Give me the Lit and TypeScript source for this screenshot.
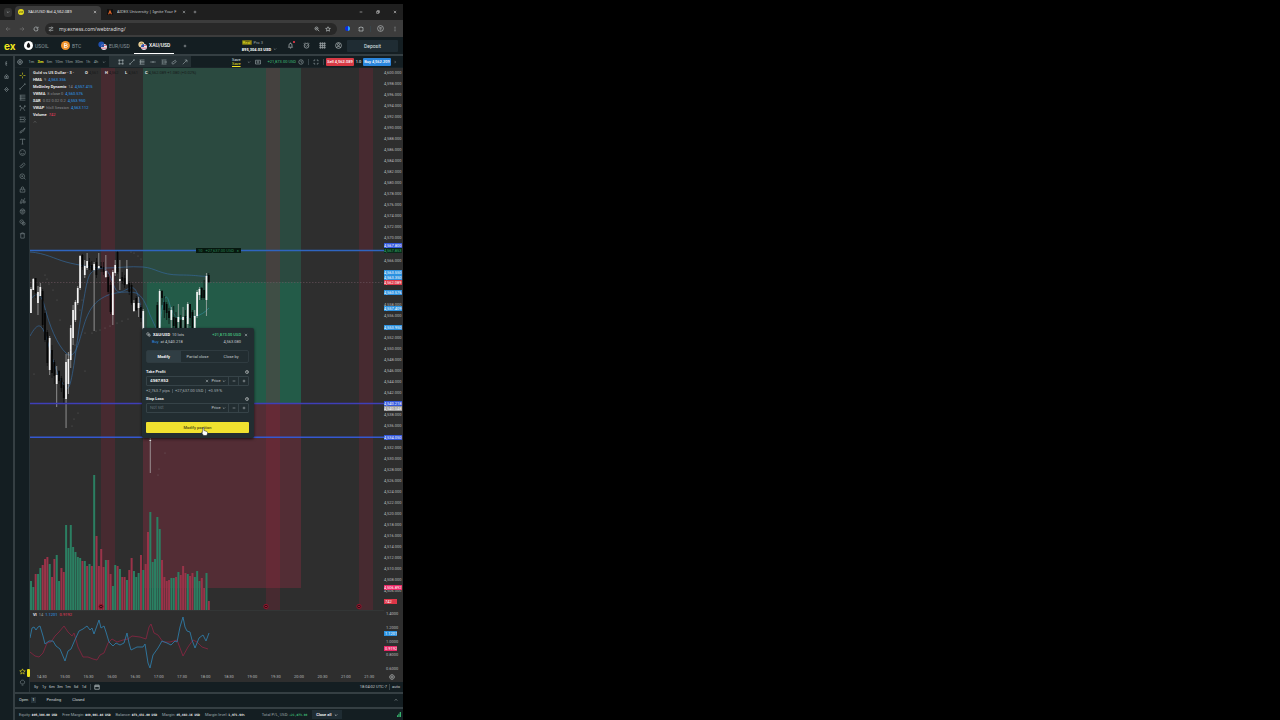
import { LitElement, html, svg, css } from "lit";
import { customElement } from "lit/decorators.js";

// ---------- icons (24 x 24 grid) ----------
const ICONS: Record<string, any> = {
  down: svg`<path d="M5 9l7 7 7-7"/>`,
  up: svg`<path d="M5 15l7-7 7 7"/>`,
  right: svg`<path d="M9 5l7 7-7 7"/>`,
  close: svg`<path d="M5 5l14 14M19 5L5 19"/>`,
  plus: svg`<path d="M12 4v16M4 12h16"/>`,
  minus: svg`<path d="M4 12h16"/>`,
  restore: svg`<path d="M4 8h12v12H4zM8 8V4h12v12h-4"/>`,
  back: svg`<path d="M21 12H4M11 5l-7 7 7 7"/>`,
  forward: svg`<path d="M3 12h17M13 5l7 7-7 7"/>`,
  reload: svg`<path d="M20 12a8 8 0 1 1-3-6.200M20 3v6h-6"/>`,
  tune: svg`<path d="M3 7h8M18 7h3M3 17h3M13 17h8"/><circle cx="15" cy="7" r="3"/><circle cx="9" cy="17" r="3"/>`,
  zoom: svg`<circle cx="10" cy="10" r="6"/><path d="M15 15l6 6M7 10h6"/>`,
  star: svg`<path d="M12 3l2.700 6.200 6.800.6-5.200 4.400 1.600 6.600L12 17.300 6.100 20.800l1.600-6.600L2.500 9.800l6.800-.6z"/>`,
  puzzle: svg`<path d="M4 6h5a3 3 0 0 1 6 0h5v14H4v-5a3 3 0 0 0 0-5z"/>`,
  avatar: svg`<circle cx="12" cy="12" r="10"/><path d="M8 9h8M8 13h8M10 17h4"/>`,
  dots: svg`<path d="M12 3v4M12 10v4M12 17v4"/>`,
  bell: svg`<path d="M5 18h14l-2-3v-5a5 5 0 0 0-10 0v5zM10 21h4M12 5V2"/>`,
  alarm: svg`<circle cx="12" cy="13" r="8"/><path d="M9 12l3 3 4-4M3 6l4-4M21 6l-4-4"/>`,
  grid: svg`<path d="M3 3h4v4H3zM10 3h4v4h-4zM17 3h4v4h-4zM3 10h4v4H3zM10 10h4v4h-4zM17 10h4v4h-4zM3 17h4v4H3zM10 17h4v4h-4zM17 17h4v4h-4z"/>`,
  user: svg`<circle cx="12" cy="12" r="10"/><circle cx="12" cy="9" r="3.500"/><path d="M5 19c2-5 12-5 14 0"/>`,
  clock: svg`<circle cx="12" cy="12" r="9"/><path d="M12 7v5l4 2"/>`,
  gear: svg`<circle cx="12" cy="12" r="9"/><circle cx="12" cy="12" r="3"/><path d="M12 1v4M12 19v4M1 12h4M19 12h4"/>`,
  rect: svg`<path d="M5 5h14v14H5z"/><path d="M3 3h4v4H3zM17 3h4v4h-4zM3 17h4v4H3zM17 17h4v4h-4z"/>`,
  line: svg`<path d="M5 19L19 5"/><circle cx="4" cy="20" r="2"/><circle cx="20" cy="4" r="2"/>`,
  arrow: svg`<path d="M3 21L20 4M11 4h9v9"/>`,
  fib: svg`<path d="M2 4h20M2 10h20M2 15h20M2 21h20M6 4v17"/>`,
  hline: svg`<path d="M1 12h8M15 12h8"/><circle cx="12" cy="12" r="2.500"/>`,
  position: svg`<path d="M2 4h20M2 12h14M2 20h20"/><circle cx="19" cy="12" r="3"/><path d="M6 4v16" stroke-dasharray="2 2"/>`,
  channel: svg`<path d="M3 15L17 5M7 21L21 11M3 15l4 6M17 5l4 6"/>`,
  camera: svg`<path d="M2 5h20v15H2z"/><circle cx="12" cy="12" r="4"/>`,
  full: svg`<path d="M4 9V4h5M15 4h5v5M20 15v5h-5M9 20H4v-5"/>`,
  cross: svg`<path d="M12 2v7M12 15v7M2 12h7M15 12h7"/>`,
  pattern: svg`<path d="M4 20L9 9l6 3 5 8M4 4l5 5M20 4l-5 8"/><circle cx="4" cy="4" r="2"/><circle cx="20" cy="4" r="2"/>`,
  brush: svg`<path d="M21 3L10 13M10 13c-4-1-6 2-7 7 5 1 9-2 7-7zM14 16l7-13"/>`,
  text: svg`<path d="M4 7V4h16v3M12 4v17M9 21h6"/>`,
  smile: svg`<circle cx="12" cy="12" r="10"/><path d="M7 14c2 4 8 4 10 0M8 9h1M15 9h1"/>`,
  ruler: svg`<path d="M3 16L16 3l5 5L8 21zM8 12l3 3M12 8l3 3"/>`,
  magnify: svg`<circle cx="11" cy="11" r="8"/><path d="M17 17l5 5M11 8v6M8 11h6"/>`,
  lock: svg`<path d="M4 11h16v10H4zM8 11V7a4 4 0 0 1 8 0v4M12 15v2"/>`,
  magnet: svg`<path d="M4 20l5-12 6 5 5-9M3 21h7v-6M14 20h7v-6h-7z"/>`,
  eye: svg`<path d="M12 3a8 9 0 1 0 .1 0zM4 8l16 0"/><circle cx="12" cy="14" r="3"/>`,
  link: svg`<circle cx="9" cy="9" r="6"/><circle cx="16" cy="16" r="5"/><path d="M7 9h4M16 13v6"/>`,
  trash: svg`<path d="M3 6h18M6 6v15h12V6M9 6V3h6v3"/>`,
  bulb: svg`<path d="M8 17c-6-5-3-13 4-13s10 8 4 13zM9 21h6"/>`,
  calendar: svg`<path d="M3 5h18v16H3zM3 10h18M8 2v5M16 2v5"/>`,
  sort: svg`<path d="M9 20V4h6M9 12h6M9 20h6"/>`,
  home: svg`<path d="M4 21V9l8-6 8 6v12z"/><path d="M8 13h8M12 10v8"/>`,
  diamond: svg`<path d="M12 2l9 10-9 10-9-10z"/><path d="M7 12h10"/>`,
};
const icon = (name: string, cls = "") =>
  html`<svg class="ic ${cls}" viewBox="0 0 24 24" aria-hidden="true">${ICONS[name]}</svg>`;

// ---------- chart data ----------
const PITCH = 2.34;
const barX = (i: number) => 30 + i * PITCH;

// volume: direction and bar height
const VOLUME =
  "g29 g23 r36 g36 g42 r45 r51 r53 g46 r33 r51 g55 g29 r42 r38 g85 g62 g85 g63 g58 g53 g52 r49 g49 r44 g46 r44 g135 r74 r44 r61 r43 g50 r50 r36 g24 g45 r44 g41 r33 r33 g30 r40 r52 g39 g33 g37 r55 g40 r46 r78 g98 g48 g51 g93 g81 r50 r33 r29 r30 g32 g32 r33 g38 r35 r44 r37 g36 r34 r37 g33 g39 g29 r32 r22 g37 r9"
    .split(" ")
    .map((v) => ({ up: v[0] === "g", h: Number(v.slice(1)) }));

// candles: slot, kind, body top, body bottom, wick top, wick bottom
const CANDLES: [number, string, number, number, number, number][] = [
  [0, "w", 289, 313, 287, 313], [1, "w", 279, 290, 278, 290], [2, "b", 278, 293, 278, 298],
  [3, "w", 292, 303, 286, 315], [4, "w", 287, 296, 283, 296], [5, "b", 291, 325, 289, 328],
  [6, "b", 313, 340, 310, 342], [7, "b", 332, 363, 330, 366], [8, "w", 338, 370, 336, 375],
  [9, "b", 350, 373, 345, 378], [10, "b", 362, 376, 360, 384], [11, "w", 375, 384, 366, 407],
  [12, "b", 371, 381, 370, 384], [13, "b", 378, 388, 376, 392], [14, "b", 385, 398, 382, 404],
  [15, "w", 362, 399, 354, 428], [16, "w", 359, 384, 352, 394], [17, "w", 328, 360, 325, 368],
  [18, "w", 310, 338, 305, 345], [19, "w", 302, 320, 300, 322], [20, "w", 288, 303, 286, 305],
  [21, "w", 256, 288, 255, 290], [22, "b", 255, 267, 254, 270], [23, "w", 266, 275, 260, 278],
  [24, "w", 261, 268, 253, 270], [25, "b", 262, 268, 258, 270], [26, "b", 265, 270, 261, 272],
  [27, "w", 264, 270, 262, 331], [28, "b", 262, 275, 258, 278], [29, "w", 266, 268, 253, 269],
  [30, "b", 266, 268, 262, 272], [31, "b", 267, 272, 262, 275], [32, "w", 271, 277, 255, 278],
  [33, "b", 277, 292, 274, 294], [34, "b", 285, 312, 282, 314], [35, "w", 272, 315, 270, 325],
  [36, "w", 265, 273, 260, 276], [37, "b", 252, 272, 250, 274], [38, "w", 279, 281, 260, 290],
  [39, "b", 277, 281, 272, 284], [40, "b", 278, 285, 275, 288], [41, "w", 269, 284, 260, 285],
  [42, "b", 283, 292, 281, 295], [43, "b", 285, 303, 283, 305], [44, "w", 303, 311, 300, 312],
  [45, "b", 298, 310, 296, 311], [46, "w", 303, 308, 297, 317], [47, "b", 307, 318, 305, 322],
  [48, "w", 311, 332, 309, 334], [51, "w", 440, 441, 438, 473], [54, "b", 305, 330, 302, 332],
  [55, "w", 291, 330, 289, 332], [56, "b", 291, 298, 290, 305], [57, "b", 302, 310, 296, 318],
  [58, "b", 304, 313, 302, 320], [59, "b", 311, 318, 308, 324], [60, "w", 310, 320, 307, 330],
  [61, "b", 317, 326, 306, 330], [62, "b", 318, 328, 312, 330], [63, "w", 317, 322, 304, 330],
  [64, "b", 320, 328, 315, 330], [65, "w", 317, 320, 307, 330], [66, "b", 316, 328, 310, 330],
  [67, "w", 304, 324, 302, 328], [68, "b", 304, 318, 304, 326], [69, "b", 312, 330, 310, 330],
  [70, "w", 316, 330, 310, 332], [71, "w", 292, 316, 290, 318], [72, "w", 289, 295, 287, 300],
  [73, "b", 288, 298, 287, 300], [74, "b", 290, 298, 280, 300], [75, "w", 276, 300, 273, 316],
  [76, "b", 275, 282, 273, 283],
];

const SESSION_BANDS = [101, 266, 359];

const OSC_BLUE =
  "30,638 32,628 34,627 36,630 38,627 40,626 43,636 45,644 49,641 53,641 56,646 60,649 65,661 68,651 71,649 74,642 79,631 83,629 87,626 90,630 92,628 94,634 99,620 101,628 104,626 106,632 109,642 113,646 116,643 120,645 124,643 127,633 129,643 131,650 137,647 143,647 145,644 148,663 150,668 153,655 158,648 162,641 167,643 171,645 175,641 177,642 180,627 183,617 185,627 187,631 190,632 192,640 195,648 199,638 203,635 206,641 209,633";
const OSC_RED =
  "30,652 35,656 39,657 43,653 47,643 51,642 55,636 59,632 64,626 68,632 72,636 74,633 78,647 83,657 88,657 93,659 97,660 100,655 104,653 108,643 112,639 117,642 123,640 128,639 132,636 140,637 146,639 149,627 151,624 154,633 158,635 163,642 170,642 177,640 180,648 183,656 188,647 193,640 197,642 202,647 208,649";

const DOTS: [number, number][] = [
  [45, 275], [47, 279], [49, 284], [53, 290], [57, 300], [60, 320], [67, 355], [71, 350], [75, 345],
  [80, 310], [82, 300], [85, 333], [92, 333], [96, 331], [100, 330], [105, 328], [110, 326], [117, 323],
  [122, 321], [128, 319], [131, 252], [134, 253], [138, 256], [141, 259], [34, 374], [85, 371],
  [78, 413], [74, 419], [72, 426], [165, 453], [159, 469], [158, 475],
];

// grid prices that a tag covers are left blank
const COVERED = new Set([4568, 4564, 4562, 4560, 4554, 4540, 4534, 4504]);
const PRICES = Array.from({ length: 49 }, (_, i) => 4600 - i * 2);
const priceLabel = (p: number) => (COVERED.has(p) ? "\u00a0" : `${p.toLocaleString("en-US")}.000`);
const TIMES = "14:30 15:00 15:30 16:00 16:30 17:00 17:30 18:00 18:30 19:00 19:30 20:00 20:30 21:00 21:30".split(" ");

// price-scale tags: top within the chart, label, style
const TAGS: [number, string, string][] = [
  [175, "4,567.800", "royal"], [180, "4,567.853", "green"], [202, "4,563.550", "sky"], [207, "4,563.350", "sky"],
  [212, "4,562.089", "red"], [222, "4,560.576", "sky"], [238, "4,557.409", "sky"],
  [257, "4,553.950", "sky"], [333, "4,540.218", "royal"], [338, "4,540.048", "grey"],
  [367, "4,534.050", "royal"], [517, "4,506.892", "pink"],
  [531, "742", "red narrow"], [563, "1.1201", "sky narrow"], [578, "0.9192", "pink narrow"],
];

@customElement("app-root")
export class AppRoot extends LitElement {
  static styles = css`
    :host {
      display: grid;
      grid-template-columns: 403fr 877fr;
      min-height: 100vh;
      background: #000;
      color: #c9cfd1;
      font: 5px/6px Roboto, "Liberation Sans", sans-serif;
    }
    * { box-sizing: border-box; }
    button, input {
      font: inherit; color: inherit; background: none; border: 0; padding: 0; margin: 0; min-width: 0;
    }
    button { cursor: pointer; white-space: nowrap; display: inline-flex; align-items: center; justify-content: center; }
    .ic {
      width: 6px; height: 6px; flex: none; display: block;
      fill: none; stroke: currentColor; stroke-width: 2.500;
    }
    .ic.s { width: 4px; height: 4px; stroke-width: 3; }
    .ic.l { width: 7px; height: 7px; stroke-width: 2; }
    .grow { flex: 1; }
    .screen { display: flex; flex-direction: column; padding-top: 4px; min-width: 0; background: #000; }

    /* browser */
    .tabstrip { display: flex; align-items: center; height: 16px; padding: 2px 6px 2px 4px; background: #1f1f1f; gap: 3px; }
    .menu { width: 8px; height: 9px; border-radius: 3px; background: #343434; }
    .tab { display: flex; align-items: center; height: 100%; gap: 4px; padding: 0 4px 0 3px; font-family: "Noto Sans", sans-serif; font-size: 4px; width: 86px; }
    .tab.on { background: #3c3c3c; border-radius: 4px 4px 0 0; color: #f1f1f1; height: 14px; margin-bottom: -2px; padding-bottom: 2px; }
    .tab span { flex: 1; white-space: nowrap; overflow: hidden; }
    .fav { width: 6px; height: 6px; border-radius: 3px; background: #e6dc1c; flex: none; color: #222; font-size: 4px; line-height: 5px; text-align: center; }
    .flame { width: 6px; height: 6px; flex: none; display: block; }
    .wins { display: flex; gap: 13px; color: #eee; }
    .address { display: flex; align-items: center; height: 17px; background: #3c3c3c; padding: 0 5px; gap: 8px; }
    .address .dim { color: #777; }
    .address .sep { margin: 0 -2px; }
    .omni { flex: 1; display: flex; align-items: center; height: 12px; border-radius: 6px; background: #282828; padding: 0 6px 0 3px; gap: 5px; margin-left: -2px; }
    .omni input { flex: 1; color: #dedede; font-family: "Noto Sans", sans-serif; }
    .ball { width: 5px; height: 5px; border-radius: 3px; background: linear-gradient(90deg, #0b2be0 50%, #27a4ff 50%); }

    /* terminal header */
    .top { display: flex; align-items: center; height: 19px; background: #141e22; border-bottom: 2px solid #353f43; padding: 0 5px 0 4px; }
    .logo { color: #efe51e; font: bold 10px/12px Inter, sans-serif; width: 16px; }
    .pairs { display: flex; height: 17px; }
    .pair { display: flex; gap: 2px; height: 17px; color: #87949a; width: 37px; justify-content: flex-start; padding-left: 4px; }
    .pair.wide { width: 41px; }
    .pair.on { color: #fff; font-weight: 500; border-bottom: 1px solid #fff; padding-left: 4px; width: 40px; margin-left: -1px; }
    .coin { width: 9px; height: 9px; display: block; flex: none; }
    .addpair { width: 22px; }
    .acct { display: flex; flex-direction: column; align-items: flex-start; gap: 2px; }
    .acct .line { display: flex; gap: 2px; align-items: center; font-size: 4px; line-height: 5px; color: #9aa5a9; }
    .acct mark { background: #6c6a14; color: #f3e81b; padding: 0 1px; border-radius: 1px; }
    .acct b { color: #fff; font-weight: 700; }
    .tools { display: flex; gap: 9px; margin: 0 5px 0 10px; color: #cfd5d7; }
    .bellbox { position: relative; }
    .bellbox i { position: absolute; right: -1px; top: -1px; width: 2px; height: 2px; border-radius: 1px; background: #ff3b4e; }
    .deposit { width: 51px; height: 12px; background: #1f2c33; color: #dfe5e7; border-radius: 1px; }

    .main { flex: 1; display: grid; grid-template-columns: 13px 1fr; min-height: 0; }
    .rail { background: #141e22; display: flex; flex-direction: column; align-items: center; padding-top: 5px; gap: 8px; color: #a5afb3; }
    .rail .ic { width: 5px; height: 5px; }
    .work { display: flex; flex-direction: column; border-left: 2px solid #353f43; min-width: 0; background: #141e22; }

    .bar { display: flex; align-items: center; height: 12px; padding-right: 4px; color: #98a3a7; font-size: 4px; border-bottom: 1px solid #1a2428; }
    .bar > .ic { margin: 0 2px; }
    .bar .sep { margin: 0 2px; }
    .frames { display: flex; margin-left: 2px; }
    .frames button { width: 9px; height: 10px; }
    .frames .long { width: 10px; }
    .frames .short { width: 8px; }
    .frames .on { color: #efe51e; font-weight: 700; }
    .draws { display: flex; align-items: center; justify-content: space-between; background: #253034; width: 82px; height: 11px; padding: 0 3px 0 9px; margin-left: 1px; }
    .save { flex-direction: column; color: #dfe5e7; line-height: 4px; margin-right: 4px; }
    .save u { color: #efe51e; }
    .pl { color: #3fbf77; padding-left: 5px; }
    .sep { width: 1px; height: 6px; background: #39454a; margin: 0 4px; }
    .trade { width: 28px; height: 8px; border-radius: 1px; color: #fff; font-weight: 500; }
    .sell { background: #d93a45; }
    .buy { background: #2a86dd; }
    .bar output { color: #fff; width: 9px; text-align: center; white-space: nowrap; }

    .body { flex: 1; display: grid; grid-template-columns: 15px 1fr; min-height: 0; }
    .side { display: flex; flex-direction: column; align-items: center; padding: 4px 0 6px; gap: 4px; color: #7f8b8f; border-right: 1px solid #2a3438; position: relative; }
    .side .brk { margin-top: 2px; }
    .side .hot { color: #efe51e; }
    .handle { position: absolute; right: -1px; bottom: 15px; width: 3px; height: 8px; background: #efe51e; border-radius: 1px; }
    .center { display: flex; flex-direction: column; min-width: 0; }
    .chart { flex: 1 1 0; display: grid; grid-template: minmax(0, 1fr) / 1fr 19px; background: #2e2e2e; position: relative; min-height: 0; }
    .plot { display: block; width: 100%; height: 100%; min-height: 0; }
    .scale { position: relative; font-size: 4px; line-height: 6px; color: #b5b8b9; display: grid; grid-template-rows: 538fr 66fr; white-space: nowrap; min-height: 0; }
    .prices { min-height: 0; padding-top: 2px; display: flex; flex-direction: column; justify-content: space-between; }
    .osc { min-height: 0; display: flex; flex-direction: column; justify-content: space-between; padding-top: 5px; padding-left: 2px; }
    .mark { position: absolute; left: 0; right: 1px; height: 5px; line-height: 5px; color: #fff; overflow: hidden; }
    .royal { background: #3358dc; }
    .sky { background: #2b91e0; }
    .red { background: #dc3648; }
    .pink { background: #e92766; }
    .grey { background: #999; }
    .green { background: #09291a; color: #36a968; }
    .narrow { right: 6px; padding-left: 1px; }
    .legend { position: absolute; left: 3px; top: 1px; font-size: 4px; color: #8a8d8e; white-space: nowrap; }
    .legend div { display: flex; gap: 2px; height: 7px; align-items: center; }
    .legend b { color: #f2f2f2; font-weight: 600; }
    .legend h1 { margin: 0; font: 600 4px/7px "Noto Sans", sans-serif; color: #eee; width: 50px; }
    .legend .v, .osclegend .v { color: #2d9cf0; }
    .legend .r, .osclegend .r { color: #f03a5d; }
    .ohlc { display: flex; color: #16191a; }
    .ohlc span { width: 20px; }
    .legend .ohlc b { font-weight: 700; color: #e9e9e9; }
    .osclegend { position: absolute; left: 3px; bottom: 54px; display: flex; gap: 2px; font-size: 4px; line-height: 6px; color: #999; }
    .osclegend b { color: #eee; }
    .times { display: grid; grid-template-columns: 351fr 22fr; align-items: center; justify-items: center; height: 10px; background: #2e2e2e; font-size: 4px; color: #b5b8b9; }
    .times div { width: 100%; display: grid; grid-template-columns: repeat(15, 1fr); text-align: center; }
    .range { display: flex; align-items: center; height: 10px; font-size: 4px; color: #c6cdd0; padding: 0 3px 0 2px; }
    .range button { width: 8px; }
    .range .sep { margin: 0 2px; }

    .orders { display: flex; align-items: center; height: 15px; border-top: 2px solid #353f43; padding: 0 5px 2px 4px; gap: 11px; color: #d0d7da; font-size: 4px; }
    .orders button { gap: 3px; }
    .orders i { font: 500 4px/6px Roboto, sans-serif; background: #26333a; padding: 0 1px; }
    .foot { display: flex; align-items: center; height: 13px; border-top: 2px solid #353f43; padding: 0 2px 0 4px; font-size: 4px; color: #9ba5a9; gap: 5px; white-space: nowrap; }
    .foot b { color: #f1f4f5; font: bold 3px/6px "DejaVu Sans Mono", monospace; }
    .foot .gain { color: #3fbf77; }
    .total { margin-left: 12px; }
    .closeall { width: 30px; height: 9px; background: #1f2c33; color: #fff; gap: 3px; font-weight: 500; }
    .sig { width: 4px; height: 5px; fill: #35b36c; display: block; }

    /* position dialog */
    .dlg { position: absolute; left: 112px; top: 260px; width: 112px; padding: 3px 5px 5px 4px; background: #222d31; border-radius: 2px; display: flex; flex-direction: column; box-shadow: 0 1px 3px #000a; color: #c3cacd; font-size: 4px; }
    .row { display: flex; align-items: center; gap: 2px; height: 7px; white-space: nowrap; }
    .row .ic { width: 5px; height: 5px; }
    .row b { color: #fff; font-weight: 600; }
    .row .up { color: #48c681; font-weight: 500; }
    .row .b { color: #2d8fe0; }
    .row.second { padding: 0 8px 0 6px; height: 8px; }
    .row.first .x { width: 6px; }
    .row .x .ic { width: 4px; height: 4px; }
    .seg { display: grid; grid-template-columns: repeat(3, 1fr); height: 13px; border: 1px solid #2f3b40; border-radius: 2px; margin: 4px 0 5px; }
    .seg .on { background: #303e44; color: #fff; font-weight: 600; }
    .lab { display: flex; justify-content: space-between; align-items: center; height: 8px; color: #f0f2f3; font: 600 4px/6px Roboto, sans-serif; }
    .field { display: flex; align-items: center; height: 10px; border: 1px solid #364348; border-radius: 1px; }
    .field input { flex: 1; padding: 0 3px; color: #fff; font: 600 4px/6px Inter, sans-serif; width: 20px; }
    .field input::placeholder { color: #657278; font-weight: 400; opacity: 1; }
    .field .unit { gap: 1px; width: 19px; }
    .field .step { width: 10px; height: 8px; border-left: 1px solid #364348; }
    .hint { display: flex; height: 9px; align-items: center; color: #a4aeb2; white-space: nowrap; }
    .hint span + span { border-left: 1px solid #47545a; padding-left: 2px; margin-left: 2px; line-height: 4px; }
    .go { height: 11px; background: #f0e12f; color: #4a4715; border-radius: 1px; margin-top: 9px; font-weight: 500; }
    .cursor { position: absolute; left: 171px; top: 359px; width: 7px; height: 9px; }
    .tp { position: absolute; left: 166px; top: 180px; width: 45px; height: 5px; background: #07180f; color: #2c8556; font: 4px/5px Roboto, sans-serif; display: flex; justify-content: space-between; padding: 0 2px; white-space: nowrap; }
  `;

  private coin(kind: string) {
    const parts: Record<string, any> = {
      oil: svg`<circle cx="12" cy="12" r="12" fill="#fff"/><path d="M12 4c7 8 5 14 0 14S5 12 12 4z" fill="#111"/>`,
      btc: svg`<circle cx="12" cy="12" r="12" fill="#f0922b"/><path d="M9 6v12M9 7h4c4 0 4 5 0 5H9h5c4 0 4 5 0 5H9" fill="none" stroke="#fff" stroke-width="2"/>`,
      eur: svg`<circle cx="9" cy="9" r="8" fill="#1f4fae"/><circle cx="16" cy="16" r="8" fill="#e5e5ee"/><path d="M8 16a8 8 0 0 1 8-8v8z" fill="#2d50a8"/><path d="M16 12h7M9 19h14" stroke="#d8455a" stroke-width="2"/>`,
      xau: svg`<circle cx="9" cy="9" r="8" fill="#e9cf96"/><path d="M5 8l6-3 3 5" stroke="#8b6b33" stroke-width="2" fill="none"/><circle cx="16" cy="16" r="8" fill="#e5e5ee"/><path d="M8 16a8 8 0 0 1 8-8v8z" fill="#2d50a8"/><path d="M16 12h7M9 19h14" stroke="#d8455a" stroke-width="2"/>`,
    };
    return html`<svg class="coin" viewBox="0 0 24 24" aria-hidden="true">${parts[kind]}</svg>`;
  }

  private plot() {
    return html`<svg class="plot" viewBox="30 68 354 604" preserveAspectRatio="none" role="img" aria-label="Gold vs US Dollar chart">
      <rect x="143" y="68" width="158" height="336" fill="#2b4a40"/>
      <rect x="147" y="282" width="154" height="122" fill="#235b48"/>
      <rect x="143" y="404" width="158" height="184" fill="#532d35"/>
      ${SESSION_BANDS.map((x) => svg`<rect x=${x} y="68" width="14" height="542" fill="#b01c3c" fill-opacity=".2"/>`)}
      <path d="M30 282.500H384" stroke="#6d5560" stroke-width=".6" stroke-dasharray="1.500 1.500"/>
      ${VOLUME.map((v, i) => svg`<rect x=${barX(i)} y=${610 - v.h} width="2" height=${v.h} fill=${v.up ? "#2b7f62" : "#9a3349"}/>`)}
      <g fill="none" stroke="#34679a" stroke-width=".7">
        <path d="M30 252C45 253 55 259 66 262S95 268 106 268 130 266 143 267 160 275 180 275 200 277 209 276"/>
        <path d="M30 300C36 292 41 292 45 308S57 345 66 353 78 345 84 325 98 300 106 296 130 291 136 293 146 304 150 315L156 328"/>
        <path d="M30 336C40 318 43 325 50 350S62 385 67 388 76 345 82 310 88 272 98 269 110 276 114 286 122 291 130 288 140 302 144 328"/>
      </g>
      <path d="M160 328C162 300 166 290 169 302S176 320 184 318 200 318 209 308" fill="none" stroke="#2f8795" stroke-width=".7"/>
      ${CANDLES.map(([i, k, t, b, wt, wb]) => {
        const x = barX(i);
        const c = k === "w" ? "#f4f4f4" : "#050505";
        return svg`<path d=${`M${x + 0.95} ${wt}V${wb}`} stroke=${k === "w" ? "#b9b9b9" : "#0c0c0c"} stroke-width=".7"/>
          <rect x=${x + 0.1} y=${t} width="1.700" height=${b - t} fill=${c}/>`;
      })}
      ${DOTS.map(([x, y]) => svg`<circle cx=${x} cy=${y} r=".4" fill="#8d8d8d"/>`)}
      <path d="M30 250.500H384" stroke="#2f65c0" stroke-width="1.300"/>
      <path d="M30 403.500H384" stroke="#3f3fb8" stroke-width="1.300"/>
      <path d="M30 437.300H384" stroke="#3558d0" stroke-width="1.500"/>
      ${SESSION_BANDS.map((x) => svg`<circle cx=${x} cy="606.500" r="2.200" fill="#3a0b16" stroke="#a3152f" stroke-width=".8"/><path d=${`M${x - 1} 606.500h2`} stroke="#d0354b" stroke-width=".6"/>`)}
      <path d="M30 610.500H384" stroke="#383c3d" stroke-width=".6"/>
      <polyline points=${OSC_RED} fill="none" stroke="#8d2442" stroke-width=".8"/>
      <polyline points=${OSC_BLUE} fill="none" stroke="#2f7ba6" stroke-width=".9"/>
    </svg>`;
  }

  private dialog() {
    return html`<section class="dlg" role="dialog" aria-label="Modify position">
      <div class="row first">${icon("link")}<b>XAU/USD</b><span>10 lots</span><span class="grow"></span><span class="up">+21,873.00 USD</span><button class="x" aria-label="Close">${icon("close", "s")}</button></div>
      <div class="row second"><span class="b">Buy</span><span>at 4,540.218</span><span class="grow"></span><span>4,563.080</span></div>
      <div class="seg"><button class="on">Modify</button><button>Partial close</button><button>Close by</button></div>
      <div class="lab"><label for="tp">Take Profit</label>${icon("clock", "s")}</div>
      <div class="field"><input id="tp" type="text" value="4567.853"><button aria-label="Clear">${icon("close", "s")}</button><button class="unit">Price ${icon("down", "s")}</button><button class="step" aria-label="Decrease take profit">${icon("minus", "s")}</button><button class="step" aria-label="Increase take profit">${icon("plus", "s")}</button></div>
      <div class="hint"><span>+2,763.7 pips</span><span>+27,637.00 USD</span><span>+0.59 %</span></div>
      <div class="lab"><label for="sl">Stop Loss</label>${icon("clock", "s")}</div>
      <div class="field"><input id="sl" type="text" placeholder="Not set"><button class="unit">Price ${icon("down", "s")}</button><button class="step" aria-label="Decrease stop loss">${icon("minus", "s")}</button><button class="step" aria-label="Increase stop loss">${icon("plus", "s")}</button></div>
      <button class="go">Modify position</button>
    </section>`;
  }

  render() {
    const side = ["cross", "line", "fib", "pattern", "position", "brush", "text", "smile", "ruler", "magnify", "lock", "magnet", "eye", "link", "trash"];
    const breaks = ["ruler", "lock", "trash"];
    return html`<main class="screen">
      <div class="tabstrip">
        <button class="menu" aria-label="Search tabs">${icon("down", "s")}</button>
        <div class="tab on"><i class="fav">ex</i><span>XAU/USD Bid 4,562.089</span>${icon("close", "s")}</div>
        <div class="tab"><svg class="flame" viewBox="0 0 24 24" aria-hidden="true"><rect width="24" height="24" fill="#111"/><path d="M12 2l8 19h-5l-3-7-3 7H4z" fill="#e2662a"/></svg><span>AIDEX University | Ignite Your F</span>${icon("close", "s")}</div>
        <button aria-label="New tab">${icon("plus", "s")}</button>
        <span class="grow"></span>
        <div class="wins">${icon("minus", "s")}${icon("restore", "s")}${icon("close", "s")}</div>
      </div>
      <div class="address">
        <span class="dim">${icon("back")}</span><span class="dim">${icon("forward")}</span>${icon("reload")}
        <div class="omni">${icon("tune")}<input type="text" aria-label="Address" value="my.exness.com/webtrading/">${icon("zoom")}${icon("star")}</div>
        <i class="ball"></i>${icon("puzzle")}<span class="sep"></span>${icon("avatar", "l")}${icon("dots")}
      </div>
      <header class="top">
        <span class="logo">ex</span>
        <nav class="pairs">
          <button class="pair">${this.coin("oil")}USOIL</button>
          <button class="pair">${this.coin("btc")}BTC</button>
          <button class="pair wide">${this.coin("eur")}EUR/USD</button>
          <button class="pair on">${this.coin("xau")}XAU/USD</button>
          <button class="addpair" aria-label="Add instrument">${icon("plus", "s")}</button>
        </nav>
        <span class="grow"></span>
        <div class="acct"><div class="line"><mark>Real</mark><span>Pro 3</span></div><div class="line"><b>895,304.03 USD</b>${icon("down", "s")}</div></div>
        <div class="tools"><span class="bellbox">${icon("bell", "l")}<i></i></span>${icon("alarm", "l")}${icon("grid", "l")}${icon("user", "l")}</div>
        <button class="deposit">Deposit</button>
      </header>
      <div class="main">
        <nav class="rail">${icon("sort")}${icon("home")}${icon("diamond")}</nav>
        <div class="work">
          <div class="bar">
            ${icon("gear")}
            <div class="frames"><button>1m</button><button class="on">3m</button><button>5m</button><button class="long">10m</button><button class="long">15m</button><button class="long">30m</button><button class="short">1h</button><button class="short">4h</button><button class="short" aria-label="More intervals">${icon("down", "s")}</button></div>
            <div class="draws">${["rect", "line", "fib", "hline", "position", "channel", "arrow"].map((n) => icon(n))}</div>
            <span class="grow"></span>
            <button class="save">Save<u>Save</u></button>${icon("down", "s")}${icon("camera")}
            <span class="pl">+21,873.00 USD</span>${icon("clock")}<span class="sep"></span>${icon("full")}<span class="sep"></span>
            <button class="trade sell">Sell 4,562.089</button><output>1.0</output><button class="trade buy">Buy 4,562.209</button>${icon("right", "s")}
          </div>
          <div class="body">
            <nav class="side">
              ${side.map((n) => icon(n, (n === "cross" ? "hot " : "") + "l " + (breaks.includes(n) ? "brk" : "")))}
              <span class="grow"></span>${icon("star", "l hot")}${icon("bulb", "l")}
              <i class="handle"></i>
            </nav>
            <div class="center">
              <div class="chart">
                ${this.plot()}
                <div class="scale">
                  <div class="prices">${PRICES.map((p) => html`<span>${priceLabel(p)}</span>`)}</div>
                  <div class="osc"><span>1.4000</span><span>1.2000</span><span>1.0000</span><span>0.8000</span><span>0.6000</span></div>
                  ${TAGS.map(([y, t, c]) => html`<span class="mark ${c}" style="top:${y}px">${t}</span>`)}
                </div>
                <div class="legend">
                  <div><h1>Gold vs US Dollar · 3 ·</h1><span class="ohlc"><span><b>O</b> 4,561</span><span><b>H</b> 4,562</span><span><b>L</b> 4,561</span><span><b>C</b> 4,562.089 +1.080 (+0.02%)</span></span></div>
                  <div><b>HMA</b> 9 <span class="v">4,563.356</span></div>
                  <div><b>McGinley Dynamic</b> 14 <span class="v">4,557.415</span></div>
                  <div><b>VWMA</b> 8 close 0 <span class="v">4,560.576</span></div>
                  <div><b>SAR</b> 0.02 0.02 0.2 <span class="v">4,553.950</span></div>
                  <div><b>VWAP</b> hlc3 Session <span class="v">4,563.112</span></div>
                  <div><b>Volume</b> <span class="r">742</span></div>
                  <div>${icon("up", "s")}</div>
                </div>
                <div class="osclegend"><b>VI</b> 14 <span class="v">1.1201</span> <span class="r">0.9192</span></div>
                <div class="tp"><span>10</span><span>+27,637.00 USD</span><span>×</span></div>
                ${this.dialog()}
                <svg class="cursor" viewBox="0 0 14 18" aria-hidden="true"><path d="M4 1c2 0 2 1 2 6l6 2c2 1 1 6-1 8H5L1 11c0-2 2-1 2 0z" fill="#fff" stroke="#222" stroke-width="1"/></svg>
              </div>
              <div class="times"><div>${TIMES.map((t) => html`<span>${t}</span>`)}</div>${icon("gear")}</div>
              <div class="range">
                ${["5y", "1y", "6m", "3m", "1m", "5d", "1d"].map((r) => html`<button>${r}</button>`)}<span class="sep"></span><button aria-label="Go to date">${icon("calendar")}</button>
                <span class="grow"></span><span>18:04:02 UTC-7</span><span class="sep"></span><button>auto</button>
              </div>
            </div>
          </div>
          <div class="orders"><button>Open <i>1</i></button><button>Pending</button><button>Closed</button><span class="grow"></span>${icon("up", "s")}</div>
          <footer class="foot">
            <span>Equity: <b>895,304.00 USD</b></span><span>Free Margin: <b>849,901.84 USD</b></span><span>Balance: <b>873,431.00 USD</b></span><span>Margin: <b>45,402.16 USD</b></span><span>Margin level: <b>1,971.94%</b></span>
            <span class="total">Total P/L, USD: <b class="gain">+21,873.00</b></span><button class="closeall">Close all ${icon("down", "s")}</button><span class="grow"></span>
            <svg class="sig" viewBox="0 0 12 15" aria-hidden="true"><path d="M0 10h3v5H0zM4 5h3v10H4zM8 0h4v15H8z"/></svg>
          </footer>
        </div>
      </div>
    </main>`;
  }
}
